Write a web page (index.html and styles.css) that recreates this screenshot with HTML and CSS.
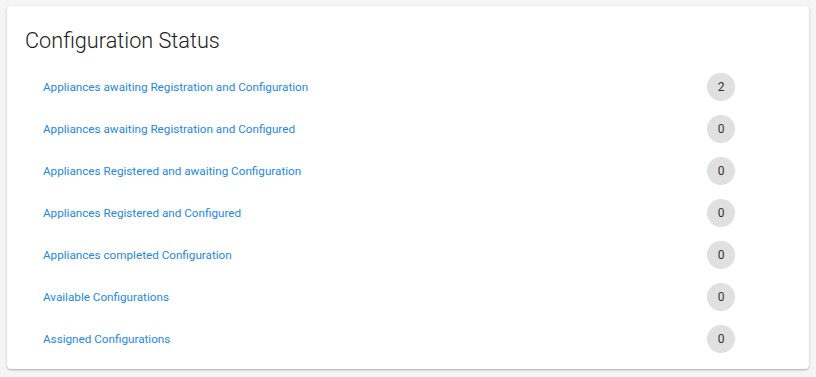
FILE: index.html
```html
<!DOCTYPE html>
<html>
<head>
<meta charset="utf-8">
<link rel="stylesheet" href="styles.css">
</head>
<body>
<div class="card">
  <h2 class="title">Configuration Status</h2>
  <ul class="list">
    <li class="row"><a class="link" href="#">Appliances awaiting Registration and Configuration</a><span class="badge">2</span></li>
    <li class="row"><a class="link" href="#">Appliances awaiting Registration and Configured</a><span class="badge">0</span></li>
    <li class="row"><a class="link" href="#">Appliances Registered and awaiting Configuration</a><span class="badge">0</span></li>
    <li class="row"><a class="link" href="#">Appliances Registered and Configured</a><span class="badge">0</span></li>
    <li class="row"><a class="link" href="#">Appliances completed Configuration</a><span class="badge">0</span></li>
    <li class="row"><a class="link" href="#">Available Configurations</a><span class="badge">0</span></li>
    <li class="row"><a class="link" href="#">Assigned Configurations</a><span class="badge">0</span></li>
  </ul>
</div>
</body>
</html>
```
FILE: styles.css
```css
html, body {
  margin: 0;
  padding: 0;
  background: #f5f5f5;
  font-family: Roboto, "Liberation Sans", sans-serif;
}
body {
  padding: 6px 7px 8px 7px;
}
.card {
  width: 802px;
  height: 363px;
  box-sizing: border-box;
  background: #fff;
  border-radius: 4px;
  box-shadow: 0 1px 3px rgba(0,0,0,0.2), 0 1px 1px rgba(0,0,0,0.12);
  padding: 21px 74px 8px 18px;
}
.title {
  margin: 0;
  font-size: 21.7px;
  font-weight: 300;
  line-height: 28px;
  color: #212121;
  height: 39px;
}
.list {
  list-style: none;
  margin: 0;
  padding: 0 0 0 18px;
}
.row {
  display: flex;
  align-items: center;
  justify-content: space-between;
  height: 42px;
}
.link {
  color: #1e88e5;
  text-decoration: none;
  font-size: 11.7px;
}
.badge {
  width: 28px;
  height: 28px;
  border-radius: 50%;
  background: #e0e0e0;
  color: #333;
  font-size: 12px;
  display: flex;
  align-items: center;
  justify-content: center;
}
```
